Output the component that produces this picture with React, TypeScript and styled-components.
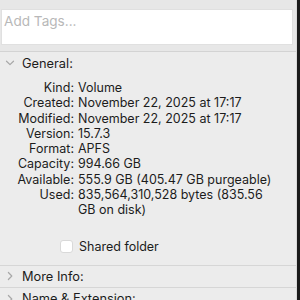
import React from "react";
import styled, { createGlobalStyle } from "styled-components";

const Global = createGlobalStyle`
  html, body { margin: 0; padding: 0; }
  body {
    background: #ececec;
    font-family: Inter, "Liberation Sans", sans-serif;
    color: #1c1c1c;
  }
`;

const Window = styled.div`
  width: 300px;
  height: 300px;
  display: flex;
  overflow: hidden;
  background: #ececec;
`;

const Panel = styled.div`
  flex: 1;
  display: flex;
  flex-direction: column;
  min-width: 0;
`;

const Edge = styled.div`
  width: 3px;
  flex-shrink: 0;
  background: #1b1b1b;
  border-left: 1px solid #dadada;
`;

const TagsArea = styled.div`
  flex-shrink: 0;
  background: #e7e7e7;
  border-bottom: 1px solid #d3d3d3;
  padding: 9px 3px 0 1px;
  box-sizing: border-box;
  height: 52px;
`;

const TagInput = styled.div`
  height: 36px;
  background: #ffffff;
  border: 1px solid #e0e0e0;
  box-sizing: border-box;
  padding: 3px 0 0 2px;
  font-size: 13.6px;
  line-height: 16px;
  color: #b8b8b8;
`;

const SectionHeader = styled.div<{ $h: number }>`
  height: ${(p) => p.$h}px;
  flex-shrink: 0;
  display: flex;
  align-items: center;
  font-size: 12.8px;
  line-height: 15px;
  box-sizing: border-box;
`;

const ChevronBox = styled.span`
  width: 22px;
  height: 15px;
  display: flex;
  align-items: center;
  justify-content: center;
  padding-right: 2px;
  box-sizing: border-box;
`;

const Section = styled.div<{ $divider?: boolean }>`
  flex-shrink: 0;
  border-bottom: ${(p) => (p.$divider ? "1px solid #d6d6d6" : "none")};
`;

const InfoGrid = styled.div`
  display: grid;
  grid-template-columns: 74px 200px;
  column-gap: 4px;
  padding-top: 6px;
  font-size: 12.5px;
  line-height: 15.3px;
`;

const Label = styled.div`
  text-align: right;
  white-space: nowrap;
`;

const Value = styled.div`
  white-space: normal;
`;

const CheckRow = styled.label`
  display: flex;
  align-items: center;
  gap: 6px;
  padding: 21px 0 11px 60px;
  font-size: 12.5px;
  line-height: 15px;
`;

const Check = styled.span`
  width: 13px;
  height: 13px;
  border-radius: 3px;
  background: #ffffff;
  border: 1px solid #d9d9d9;
  box-sizing: border-box;
`;

const Chevron = ({ dir }: { dir: "down" | "right" }) => (
  <svg width="10" height="10" viewBox="0 0 10 10">
    {dir === "down" ? (
      <path d="M1.5 3.2 L5 6.6 L8.5 3.2" fill="none" stroke="#a8a8a8" strokeWidth="1.2" strokeLinecap="round" strokeLinejoin="round" />
    ) : (
      <path d="M3.4 1.5 L6.8 5 L3.4 8.5" fill="none" stroke="#a8a8a8" strokeWidth="1.2" strokeLinecap="round" strokeLinejoin="round" />
    )}
  </svg>
);

const rows: [string, string][] = [
  ["Kind:", "Volume"],
  ["Created:", "November 22, 2025 at 17:17"],
  ["Modified:", "November 22, 2025 at 17:17"],
  ["Version:", "15.7.3"],
  ["Format:", "APFS"],
  ["Capacity:", "994.66 GB"],
  ["Available:", "555.9 GB (405.47 GB purgeable)"],
  ["Used:", "835,564,310,528 bytes (835.56 GB on disk)"],
];

export default function App() {
  return (
    <>
      <Global />
      <Window>
        <Panel>
          <TagsArea>
            <TagInput>Add Tags...</TagInput>
          </TagsArea>
          <Section $divider>
            <SectionHeader $h={22}>
              <ChevronBox>
                <Chevron dir="down" />
              </ChevronBox>
              General:
            </SectionHeader>
            <InfoGrid>
              {rows.map(([l, v]) => (
                <React.Fragment key={l}>
                  <Label>{l}</Label>
                  <Value>{v}</Value>
                </React.Fragment>
              ))}
            </InfoGrid>
            <CheckRow>
              <Check />
              Shared folder
            </CheckRow>
          </Section>
          <Section $divider>
            <SectionHeader $h={21}>
              <ChevronBox>
                <Chevron dir="right" />
              </ChevronBox>
              More Info:
            </SectionHeader>
          </Section>
          <Section>
            <SectionHeader $h={22}>
              <ChevronBox>
                <Chevron dir="right" />
              </ChevronBox>
              Name &amp; Extension:
            </SectionHeader>
          </Section>
        </Panel>
        <Edge />
      </Window>
    </>
  );
}
